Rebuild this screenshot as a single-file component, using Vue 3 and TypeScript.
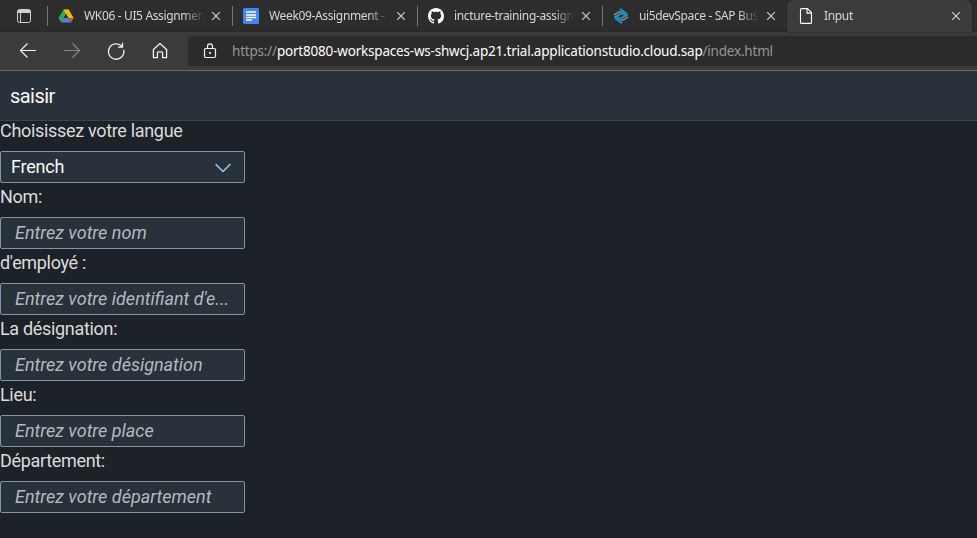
<script setup lang="ts">
interface Tab {
  id: string
  title: string
  active?: boolean
}

interface Field {
  label: string
  placeholder: string
}

const tabs: Tab[] = [
  { id: 'drive', title: 'WK06 - UI5 Assignmen' },
  { id: 'docs', title: 'Week09-Assignment -' },
  { id: 'github', title: 'incture-training-assign' },
  { id: 'sap', title: 'ui5devSpace - SAP Bus' },
  { id: 'page', title: 'Input', active: true },
]

const fields: Field[] = [
  { label: 'Nom:', placeholder: 'Entrez votre nom' },
  { label: "d'employé :", placeholder: "Entrez votre identifiant d'e..." },
  { label: 'La désignation:', placeholder: 'Entrez votre désignation' },
  { label: 'Lieu:', placeholder: 'Entrez votre place' },
  { label: 'Département:', placeholder: 'Entrez votre département' },
]
</script>

<template>
  <div class="window">
    <div class="tabstrip">
      <div class="tab-actions">
        <svg width="16" height="16" viewBox="0 0 16 16" fill="none" stroke="#d0d0d0">
          <rect x="1.5" y="1.5" width="13" height="13" rx="2" />
          <path d="M2 2.5h12v2H2z" fill="#d0d0d0" />
          <path d="M4.5 5v9" />
        </svg>
      </div>
      <div v-for="tab in tabs" :key="tab.id" class="tab" :class="{ active: tab.active }">
        <svg v-if="tab.id === 'drive'" class="favicon" viewBox="0 0 16 16">
          <path d="M5.4 1.6h5.2L8 6.1 3.2 14.4.5 9.9z" fill="#34a853" />
          <path d="M5.4 1.6h5.2l5 8.3h-5.1z" fill="#fbbc04" />
          <path d="M5.4 9.9h5.1l2.6 4.5H3.2z" fill="#4285f4" />
          <path d="M10.5 9.9h5.1l-2.5 4.5z" fill="#ea4335" />
          <path d="M8 6.1l2.3 3.8H5.7z" fill="#2d2d2d" />
        </svg>
        <svg v-else-if="tab.id === 'docs'" class="favicon" viewBox="0 0 16 16">
          <rect width="16" height="16" rx="1.5" fill="#4285f4" />
          <path d="M3 4h10M3 7h10M3 9.5h10M3 12h6" stroke="#fff" stroke-width="1.4" />
        </svg>
        <svg v-else-if="tab.id === 'github'" class="favicon" viewBox="0 0 16 16">
          <path
            fill="#fff"
            d="M8 0C3.58 0 0 3.58 0 8c0 3.54 2.29 6.53 5.47 7.59.4.07.55-.17.55-.38 0-.19-.01-.82-.01-1.49-2.01.37-2.53-.49-2.69-.94-.09-.23-.48-.94-.82-1.13-.28-.15-.68-.52-.01-.53.63-.01 1.08.58 1.23.82.72 1.21 1.87.87 2.33.66.07-.52.28-.87.51-1.07-1.78-.2-3.64-.89-3.64-3.95 0-.87.31-1.59.82-2.15-.08-.2-.36-1.02.08-2.12 0 0 .67-.21 2.2.82.64-.18 1.32-.27 2-.27s1.36.09 2 .27c1.53-1.04 2.2-.82 2.2-.82.44 1.1.16 1.92.08 2.12.51.56.82 1.27.82 2.15 0 3.07-1.87 3.75-3.65 3.95.29.25.54.73.54 1.48 0 1.07-.01 1.93-.01 2.2 0 .21.15.46.55.38A8.01 8.01 0 0 0 16 8c0-4.42-3.58-8-8-8z"
          />
        </svg>
        <svg v-else-if="tab.id === 'sap'" class="favicon" viewBox="0 0 16 16" fill="none" stroke-width="1.6">
          <path d="M7.4 3.2L.8 7M8.200 5.600L1.400 9.400" stroke="#6f8ca5" />
          <path d="M15.200 9L8.600 12.800M14.600 6.600L7.800 10.400" stroke="#6f8ca5" />
          <path d="M7 .8l7.200 5.400M7 3.600l6 4.400" stroke="#1b90d0" stroke-width="2" />
          <path d="M9 15.200L1.800 9.800M9 12.400L3 8" stroke="#1b90d0" stroke-width="2" />
        </svg>
        <svg v-else class="favicon" viewBox="0 0 16 16" fill="none" stroke="#fff" stroke-width="1.1">
          <path d="M3.5.6h6l4 4v9.8a1 1 0 0 1-1 1h-9a1 1 0 0 1-1-1V1.6a1 1 0 0 1 1-1z" />
          <path d="M9 .8v4.3h4.4" />
        </svg>
        <span class="title">{{ tab.title }}</span>
        <svg class="close" width="10" height="10" viewBox="0 0 10 10" stroke="#d0d0d0" stroke-width="1.2">
          <path d="M1.2 1.2l7.6 7.6M8.8 1.2L1.2 8.8" />
        </svg>
      </div>
    </div>

    <div class="toolbar">
      <svg class="nav" viewBox="0 0 20 20" fill="none" stroke="#f2f2f2" stroke-width="1.2">
        <path d="M18 9.5H2.5M9.5 2.5l-7 7 7 7" />
      </svg>
      <svg class="nav" viewBox="0 0 20 20" fill="none" stroke="#858585" stroke-width="1.2">
        <path d="M2 9.5h15.5M10.5 2.5l7 7-7 7" />
      </svg>
      <svg class="nav" viewBox="0 0 20 20" fill="none" stroke="#f2f2f2" stroke-width="1.3">
        <path d="M17.7 8.9A7.7 7.7 0 1 1 16 5.5M16.5 1.8v4.3h-4.5" />
      </svg>
      <svg class="nav" viewBox="0 0 20 20" fill="none" stroke="#f2f2f2" stroke-width="1.3" stroke-linejoin="round">
        <path d="M3.4 8.4L10 2.5l6.6 5.900v8.300h-4v-4.700a1.200 1.200 0 0 0-1.200-1.200H8.600a1.200 1.200 0 0 0-1.200 1.200v4.700h-4z" />
      </svg>
      <div class="address">
        <svg width="14" height="16" viewBox="0 0 14 16" fill="none" stroke="#f2f2f2" stroke-width="1.2">
          <rect x="1.5" y="5.5" width="11" height="9" rx="1.2" />
          <path d="M4.5 5.5V3.3a2.5 2.5 0 0 1 5 0v2.2" />
          <circle cx="7" cy="10" r=".5" fill="#f2f2f2" />
        </svg>
        <span class="url">https://<b>port8080-workspaces-ws-shwcj.ap21.trial.applicationstudio.cloud.sap</b>/index.html</span>
      </div>
    </div>

    <header class="page-title">saisir</header>
    <main class="form">
      <label class="label first">Choisissez votre langue</label>
      <div class="control select">
        <span>French</span>
        <svg width="16" height="10" viewBox="0 0 16 10" fill="none" stroke="#91c8f6" stroke-width="1.5">
          <path d="M.6 1.1L8 8.5l7.4-7.4" />
        </svg>
      </div>
      <template v-for="field in fields" :key="field.label">
        <label class="label">{{ field.label }}</label>
        <div class="control input">
          <span>{{ field.placeholder }}</span>
        </div>
      </template>
    </main>
  </div>
</template>

<style>
body {
  background: #1d2128;
}
</style>

<style scoped>
.window {
  height: 538px;
  overflow: hidden;
  background: #1d2128;
  color: #dcdcdc;
  font-family: Roboto, "Liberation Sans", sans-serif;
  white-space: nowrap;
}

.window * {
  box-sizing: border-box;
}

.tabstrip {
  display: flex;
  height: 32px;
  background: #2d2d2d;
  box-shadow: inset 0 -1px #272727;
  font: 12px/16px "Noto Sans", "Open Sans", sans-serif;
}

.tab-actions {
  display: flex;
  width: 47px;
  padding: 8px 0 0 16px;
}

.tab {
  display: flex;
  width: 185px;
  padding: 8px 11px 0 10px;
  background: linear-gradient(#777, #777) 0 6px / 1px 20px no-repeat;
}

.tab.active {
  padding-left: 11px;
  background: #3b3b3b;
  border-radius: 6px 6px 0 0;
  box-shadow: 0 0 2px #1c1c1c;
}

.favicon {
  width: 16px;
  height: 16px;
  flex: none;
  margin-left: 1px;
}

.active .favicon {
  margin-left: 0;
}

.title {
  width: 120px;
  height: 18px;
  margin-left: 10px;
  overflow: hidden;
  color: #d6d6d6;
  letter-spacing: -0.35px;
  mask-image: linear-gradient(90deg, #000 83%, transparent);
}

.close {
  flex: none;
  margin: 3px 0 0 7px;
}

.toolbar {
  display: flex;
  align-items: flex-start;
  height: 39px;
  padding: 9px 0 0 18px;
  background: #3b3b3b;
  border-bottom: 1px solid #6b6b6b;
}

.nav {
  width: 20px;
  height: 20px;
  flex: none;
  margin-right: 24px;
}

.address {
  display: flex;
  flex: 1;
  height: 30px;
  margin: -5px 0 0 -6px;
  padding: 7px 0 0 15px;
  background: #2b2b2b;
  border-radius: 4px 0 0 4px;
}

.url {
  margin-left: 15px;
  color: #969696;
  font: 13.5px/16px "Noto Sans", "Open Sans", sans-serif;
  letter-spacing: -0.2px;
}

.url b {
  color: #fff;
  font-weight: 400;
}

.page-title {
  height: 50px;
  padding-left: 10px;
  background: #29313a;
  border-bottom: 1px solid #3a4551;
  color: #fafafa;
  font-size: 20px;
  line-height: 50px;
  letter-spacing: -0.55px;
}

.form {
  display: flex;
  flex-direction: column;
  width: 245px;
  font-size: 18px;
}

.label {
  height: 34px;
  line-height: 28px;
  letter-spacing: -0.32px;
}

.label.first {
  height: 30px;
  line-height: 20px;
}

.control {
  display: flex;
  align-items: center;
  height: 32px;
  padding-bottom: 2px;
  border: 1px solid #8396a8;
  border-radius: 2px;
  background: #29313a;
}

.select {
  justify-content: space-between;
  padding-right: 13px;
  padding-left: 10px;
  color: #fafafa;
  letter-spacing: -0.2px;
}

.select svg {
  margin-top: 4px;
}

.input {
  padding-left: 14px;
  color: #b5babf;
  font-style: italic;
}
</style>
